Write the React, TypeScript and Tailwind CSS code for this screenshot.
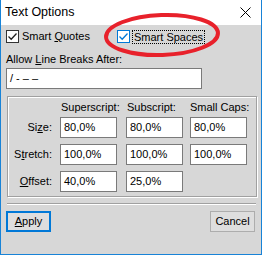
import React from "react";

const font = { fontFamily: '"Liberation Sans", Arial, sans-serif' };

const CheckMark = ({ color }: { color: string }) => (
  <svg width="11" height="11" viewBox="0 0 11 11">
    <path d="M1.5 5.5 L4.2 8.2 L9.5 2.5" fill="none" stroke={color} strokeWidth="1.3" />
  </svg>
);

const Field = ({ value, className = "" }: { value: string; className?: string }) => (
  <div
    className={`h-[21px] w-[57px] border border-[#7a7a7a] bg-white pl-[3px] flex items-center text-[11px] text-black ${className}`}
  >
    {value}
  </div>
);

const rows = [
  { label: <>Si<u>z</u>e:</>, values: ["80,0%", "80,0%", "80,0%"] },
  { label: <>S<u>t</u>retch:</>, values: ["100,0%", "100,0%", "100,0%"] },
  { label: <><u>O</u>ffset:</>, values: ["40,0%", "25,0%"] },
];

const App: React.FC = () => {
  return (
    <div
      className="relative w-[262px] h-[255px] flex flex-col border-x border-b border-[#1883d7] bg-[#d7d7d7] text-[11px] text-black overflow-hidden"
      style={font}
    >
      {/* title bar */}
      <div className="h-[25px] bg-white flex items-center justify-between pl-[4px] pr-[10px]">
        <span className="text-[12.5px] leading-none">Text Options</span>
        <svg width="11" height="11" viewBox="0 0 11 11">
          <path d="M0.5 0.5 L10.5 10.5 M10.5 0.5 L0.5 10.5" stroke="#000" strokeWidth="1" />
        </svg>
      </div>

      <div className="flex flex-col px-[5px]">
        {/* checkboxes */}
        <div className="flex items-center mt-[5px] h-[13px]">
          <div className="w-[13px] h-[13px] border border-[#333] bg-white flex items-center justify-center">
            <CheckMark color="#222" />
          </div>
          <span className="ml-[3px] w-[95px]">
            Smart <u>Q</u>uotes
          </span>
          <div className="w-[13px] h-[13px] border border-[#0078d7] bg-white flex items-center justify-center">
            <CheckMark color="#0078d7" />
          </div>
          <span className="ml-[2px] px-[1px] leading-[12px] border border-dotted border-black">Smart Spaces</span>
        </div>

        <div className="mt-[10px] leading-[13px]">
          Allow <u>L</u>ine Breaks After:
        </div>
        <div className="mt-[2px] h-[21px] w-[196px] border border-[#7a7a7a] bg-white flex items-center pl-[3px]">
          / - – –
        </div>

        {/* group box */}
        <div className="mt-[7px] ml-[1px] w-[250px] h-[101px] border border-[#a0a0a0] shadow-[inset_1px_1px_0_#fff,1px_1px_0_#fff] flex flex-col">
          <div className="flex mt-[4px] h-[13px] leading-[13px]">
            <span className="ml-[53px] w-[66px]">Superscript:</span>
            <span className="w-[63px]">Subscript:</span>
            <span>Small Caps:</span>
          </div>
          <div className="flex flex-col gap-[6px] mt-[3px]">
            {rows.map((r, i) => (
              <div key={i} className="flex items-center">
                <span className="w-[44px] text-right">{r.label}</span>
                <Field value={r.values[0]} className="ml-[8px]" />
                <Field value={r.values[1]} className="ml-[9px]" />
                {r.values[2] && <Field value={r.values[2]} className="ml-[7px]" />}
              </div>
            ))}
          </div>
        </div>

        {/* separator */}
        <div className="mt-[6px] ml-[1px] w-[249px] border-t border-[#a0a0a0] border-b border-b-white" />

        {/* buttons */}
        <div className="flex justify-between mt-[6px] pr-[1px]">
          <button className="w-[45px] h-[21px] border-2 border-[#0078d7] bg-[#dedede] flex items-center justify-center">
            <span>
              <u>A</u>pply
            </span>
          </button>
          <button className="w-[45px] h-[21px] border border-[#adadad] bg-[#dedede] flex items-center justify-center">
            Cancel
          </button>
        </div>
      </div>

      {/* red annotation */}
      <svg className="absolute left-0 top-0 pointer-events-none" width="262" height="255">
        <ellipse
          cx="161"
          cy="35"
          rx="56"
          ry="20"
          fill="none"
          stroke="#e8212b"
          strokeWidth="4"
          transform="rotate(-2 161 35)"
        />
      </svg>
    </div>
  );
};

export default App;
